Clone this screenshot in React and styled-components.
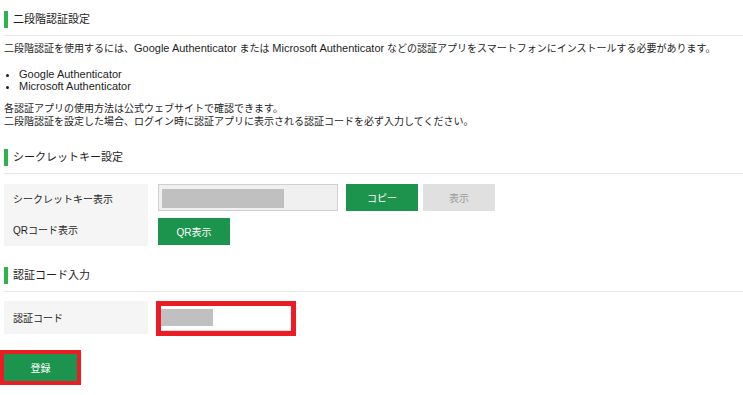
import React from "react";
import styled, { createGlobalStyle } from "styled-components";

const GlobalStyle = createGlobalStyle`
  body {
    margin: 0;
    background: #fff;
    color: #1e1e1e;
    font-family: "Liberation Sans", "Noto Sans CJK JP", sans-serif;
    font-size: 10px;
  }
`;

const Page = styled.div`
  padding: 11px 0 0 4px;
`;

const Heading = styled.h2`
  margin: ${({ first }) => (first ? "0" : "21px")} 0 0;
  padding-bottom: 7px;
  border-bottom: 1px solid #e8e8e8;
  font-size: 11px;
  font-weight: normal;
  span {
    display: block;
    border-left: 4px solid #2fb24c;
    padding-left: 5px;
    line-height: 17px;
  }
`;

const Text = styled.p`
  margin: ${({ top }) => top}px 0 0;
  line-height: 13px;
`;

const Term = styled.span`
  font-size: 11px;
`;

const List = styled.ul`
  margin: 13px 0 0;
  padding: 0 0 0 15px;
  line-height: 12px;
  li {
    font-size: 11px;
  }
`;

const Table = styled.div`
  display: grid;
  grid-template-columns: 144px 1fr;
  column-gap: 10px;
  margin-top: ${({ top }) => top}px;
  align-items: ${({ align }) => align || "stretch"};
`;

const Label = styled.div`
  background: #f5f5f5;
  display: flex;
  align-items: center;
  padding-left: 9px;
  height: ${({ h }) => (h ? `${h}px` : "auto")};
`;

const Cell = styled.div`
  display: flex;
  gap: 8px;
  padding: ${({ pad }) => pad};
`;

const KeyField = styled.div`
  width: 180px;
  height: 27px;
  border: 1px solid #cfcfcf;
  background: #f0f0f0;
  padding: 4px 0 0 3px;
  box-sizing: border-box;
`;

const Mask = styled.div`
  width: ${({ w }) => w}px;
  height: ${({ h }) => h}px;
  background: #c0c0c0;
`;

const Button = styled.button`
  width: 72px;
  height: 27px;
  border: none;
  padding: 0;
  font-family: inherit;
  font-size: 10px;
  background: ${({ muted }) => (muted ? "#e0e0e0" : "#1d944d")};
  color: ${({ muted }) => (muted ? "#9a9a9a" : "#fff")};
  margin-left: ${({ ml }) => ml || 0}px;
`;

const Highlight = styled.div`
  border: 5px solid #ec1c24;
  margin-left: -2px;
  width: 130px;
  height: 25px;
`;

const CodeInput = styled.div`
  height: 100%;
  box-sizing: border-box;
  border-bottom: 1px solid #dcdcdc;
  background: #fff;
  padding-top: 3px;
`;

const Submit = styled.div`
  display: inline-block;
  margin: 14px 0 0 -4px;
  border: 4px solid #ec1c24;
  line-height: 0;
  button {
    width: 73px;
  }
`;

export default function App() {
  return (
    <>
      <GlobalStyle />
      <Page>
        <Heading first>
          <span>二段階認証設定</span>
        </Heading>
        <Text top={6}>
          二段階認証を使用するには、<Term>Google Authenticator</Term> または{" "}
          <Term>Microsoft Authenticator</Term> などの認証アプリをスマートフォンにインストールする必要があります。
        </Text>
        <List>
          <li>Google Authenticator</li>
          <li>Microsoft Authenticator</li>
        </List>
        <Text top={10}>
          各認証アプリの使用方法は公式ウェブサイトで確認できます。
          <br />
          二段階認証を設定した場合、ログイン時に認証アプリに表示される認証コードを必ず入力してください。
        </Text>

        <Heading>
          <span>シークレットキー設定</span>
        </Heading>
        <Table top={10}>
          <Label>シークレットキー表示</Label>
          <Cell pad="0 0 2px">
            <KeyField>
              <Mask w={122} h={19} />
            </KeyField>
            <Button>コピー</Button>
            <Button muted ml={-3}>表示</Button>
          </Cell>
          <Label>QRコード表示</Label>
          <Cell pad="5px 0 1px">
            <Button>QR表示</Button>
          </Cell>
        </Table>

        <Heading>
          <span>認証コード入力</span>
        </Heading>
        <Table top={9} align="start">
          <Label h={33}>認証コード</Label>
          <Cell>
            <Highlight>
              <CodeInput>
                <Mask w={52} h={17} />
              </CodeInput>
            </Highlight>
          </Cell>
        </Table>

        <Submit>
          <Button>登録</Button>
        </Submit>
      </Page>
    </>
  );
}
